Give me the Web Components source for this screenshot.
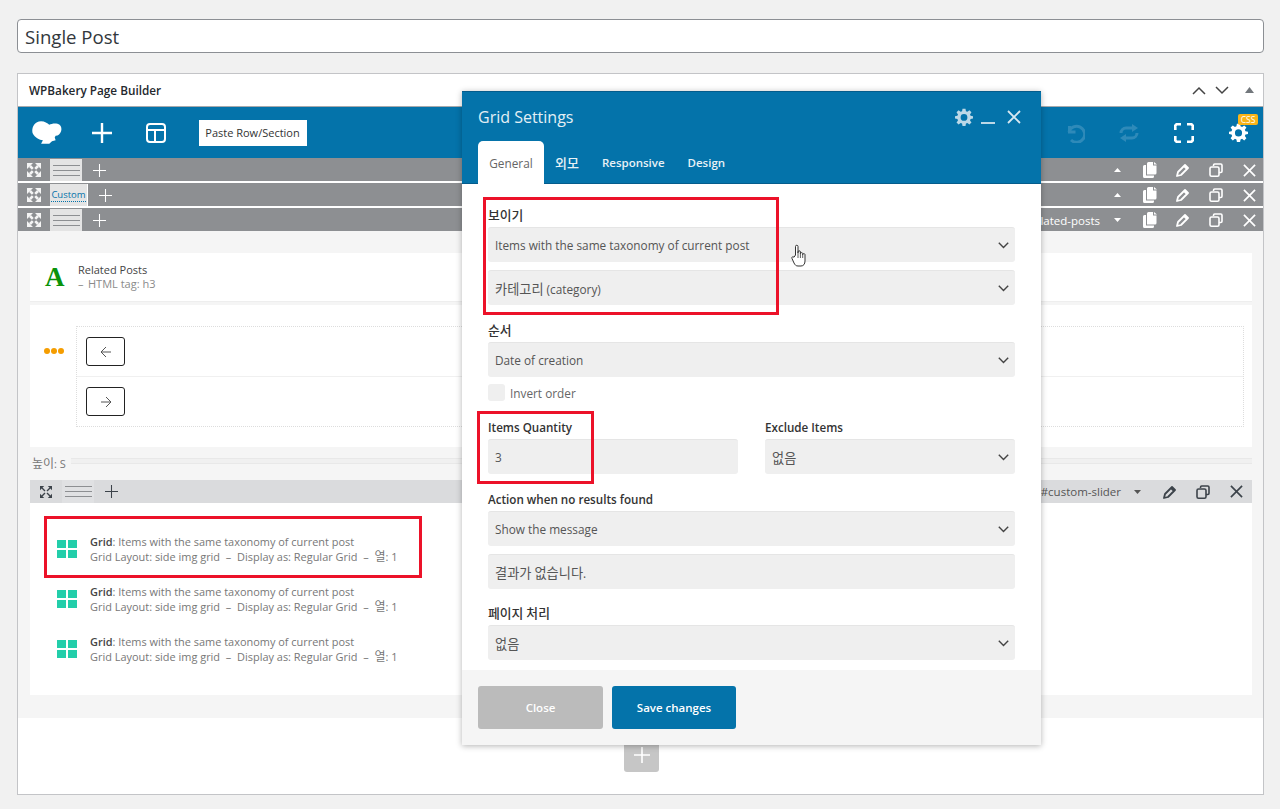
<!doctype html>
<html lang="ko">
<head>
<meta charset="utf-8">
<title>Single Post</title>
<style>
  html, body { margin: 0; background: #f1f1f1; }
  body {
    position: relative;
    height: 809px;
    overflow: hidden;
    box-sizing: border-box;
    padding: 19px 16px 0 17px;
    font-family: "Open Sans", "Noto Sans CJK KR", sans-serif;
    font-size: 12px;
    color: #444;
  }
</style>
</head>
<body>
  <title-box>Single Post</title-box>
  <builder-box>
    <row-bar tab="lines"></row-bar>
    <row-bar tab="custom" gap></row-bar>
    <row-bar tab="lines" gap label="related-posts" down></row-bar>
    <content-area>
      <heading-card></heading-card>
      <slider-card></slider-card>
      <height-sep></height-sep>
      <row-bar light tab="lines" label="#custom-slider" down></row-bar>
      <grid-list>
        <grid-item></grid-item>
        <grid-item></grid-item>
        <grid-item></grid-item>
      </grid-list>
    </content-area>
    <add-foot></add-foot>
  </builder-box>

  <settings-modal>
    <set-field label="보이기" value="Items with the same taxonomy of current post" select style="margin-top:23px"></set-field>
    <set-field value="카테고리 (category)" select style="margin-top:8px"></set-field>
    <set-field label="순서" value="Date of creation" select style="margin-top:17px"></set-field>
    <invert-check>Invert order</invert-check>
    <field-pair>
      <set-field label="Items Quantity" value="3"></set-field>
      <set-field label="Exclude Items" value="없음" select></set-field>
    </field-pair>
    <set-field label="Action when no results found" value="Show the message" select style="margin-top:17px"></set-field>
    <set-field value="결과가 없습니다." style="margin-top:8px"></set-field>
    <set-field label="페이지 처리" value="없음" select style="margin-top:16px"></set-field>
  </settings-modal>

  <mark-box style="left:483px;top:197px;width:296px;height:118px"></mark-box>
  <mark-box style="left:477px;top:411px;width:117px;height:73px"></mark-box>
  <mark-box style="left:44px;top:516px;width:378px;height:62px"></mark-box>
  <hand-cursor></hand-cursor>

<script>
const hangul = text => text.replace(/[가-힣]+/g, m => `<span class="k">${m}</span>`)

const gear = (size, fill) => `<svg width="${size}" height="${size}" viewBox="0 0 24 24"><path fill="${fill}" fill-rule="evenodd" d="M10 1h4l.6 3.2 1.900.8L19.200 3 22 5.800 20 8.500l.8 1.900L24 11v3l-3.200.6-.8 1.900 2 2.700-2.800 2.800-2.700-2-1.900.8L14 24h-4l-.6-3.200-1.900-.8-2.700 2L2 19.200l2-2.700-.8-1.900L0 14v-3l3.200-.6.8-1.900-2-2.700L4.800 3l2.700 2 1.900-.8zM12 8a4.500 4.500 0 1 0 0 9 4.500 4.500 0 0 0 0-9z"/></svg>`

const cross = (size, color, w = 2) => `<svg width="${size}" height="${size}" viewBox="0 0 14 14"><path d="M1 1l12 12M13 1L1 13" stroke="${color}" stroke-width="${w}" fill="none"/></svg>`

const plus = (size, color, w = 2) => `<svg width="${size}" height="${size}" viewBox="0 0 20 20"><path d="M10 0v20M0 10h20" stroke="${color}" stroke-width="${w}" fill="none"/></svg>`

const chevron = (dir, color) => `<svg width="14" height="9" viewBox="0 0 14 9"><path d="${dir === 'up' ? 'M1 8l6-6 6 6' : 'M1 1l6 6 6-6'}" stroke="${color}" stroke-width="1.500" fill="none"/></svg>`

const caret = (dir, color, w = 7, h = 4) => `<svg width="${w}" height="${h}" viewBox="0 0 8 5" preserveAspectRatio="none"><path d="${dir === 'up' ? 'M4 0l4 5H0z' : 'M0 0h8L4 5z'}" fill="${color}"/></svg>`

const moveSolid = color => `<svg width="14" height="14" viewBox="0 0 14 14">
  <path fill="${color}" d="M0 0h6L0 6zM14 0v6L8 0zM0 14V8l6 6zM14 14H8l6-6z"/>
  <path stroke="${color}" stroke-width="2.600" d="M3 3l2.800 2.800M11 3L8.200 5.800M3 11l2.800-2.800M11 11L8.200 8.200"/>
</svg>`

const moveLine = color => `<svg width="14" height="14" viewBox="0 0 14 14">
  <path fill="${color}" d="M1 1h4.200L1 5.200zM13 1v4.200L8.800 1zM1 13V8.800L5.200 13zM13 13H8.800L13 8.800z"/>
  <path stroke="${color}" stroke-width="1.400" d="M3 3l3 3M11 3L8 6M3 11l3-3M11 11L8 8"/>
</svg>`

const linesIcon = color => `<svg width="27" height="13" viewBox="0 0 27 13"><path d="M0 1.500h27M0 6.500h27M0 11.500h27" stroke="${color}" stroke-width="1.200"/></svg>`

const pasteIcon = color => `<svg width="14" height="16" viewBox="0 0 14 16"><path fill="${color}" d="M4 1.500A1.500 1.500 0 0 1 5.500 0H10v3.500h3.500V11a1.500 1.500 0 0 1-1.500 1.500H4zM11 0l3 2.500h-3zM0 4.500A1.500 1.500 0 0 1 1.500 3H3v10.500h8V14.500A1.500 1.500 0 0 1 9.500 16h-8A1.500 1.500 0 0 1 0 14.500z"/></svg>`

const pencilIcon = color => `<svg width="14" height="14" viewBox="0 0 14 14"><path fill="none" stroke="${color}" stroke-width="1.800" stroke-linejoin="round" d="M1 13l1-4 7-7 3 3-7 7zM8 3l3 3"/></svg>`

const copyIcon = color => `<svg width="14" height="14" viewBox="0 0 14 14"><path fill="none" stroke="${color}" stroke-width="1.600" d="M4.500 3V2.200A1.200 1.200 0 0 1 5.700 1h6.100A1.200 1.200 0 0 1 13 2.200v6.100a1.200 1.200 0 0 1-1.200 1.200H10"/><rect x="1" y="4" width="9" height="9.200" rx="1.500" fill="none" stroke="${color}" stroke-width="1.600"/></svg>`

class BaseElement extends HTMLElement {
  constructor () {
    super()
    this.attachShadow({ mode: 'open' })
  }

  connectedCallback () {
    this.shadowRoot.innerHTML = `<style>${this.css}</style>${this.html}`
  }
}

class TitleBox extends BaseElement {
  get css () {
    return `:host {
      display: flex; align-items: center; box-sizing: border-box;
      height: 34px; width: 1247px; padding: 0 7px;
      background: #fff; border: 1px solid #8c8f94; border-radius: 4px;
      font-size: 18.600px; color: #32373c;
    }`
  }
  get html () { return `<slot></slot>` }
}

class BuilderBox extends BaseElement {
  get css () {
    return `
      :host {
        display: block; box-sizing: border-box; margin-top: 20px;
        width: 1247px; height: 722px;
        background: #fff; border: 1px solid #c3c4c7;
      }
      .head {
        display: flex; align-items: center; height: 32px; padding: 0 8px 0 11px;
        font-size: 11.750px; font-weight: 600; color: #23282d;
        border-bottom: 1px solid #a7a9ac;
      }
      .name { flex: 1; }
      .head svg { display: block; }
      .head .c { margin-left: 9px; }
      .head .t { margin-left: 16px; margin-right: 1px; }
      .bar {
        display: flex; align-items: center; height: 51px; padding: 0 10px 0 14px;
        background: #0473aa; gap: 24.500px;
      }
      .ic { width: 30px; display: flex; justify-content: center; }
      .paste {
        display: flex; align-items: center; justify-content: center;
        width: 108px; height: 26px; margin-left: 3px;
        background: #fff; color: #333; font-size: 11px;
      }
      .fill { flex: 1; }
      .gearbox { position: relative; }
      .badge {
        position: absolute; left: 15px; top: -9px; width: 20px; height: 11px;
        background: #f9b418; border-radius: 2px; color: #fff;
        font-size: 8.500px; line-height: 11px; text-align: center;
      }
    `
  }
  get html () {
    return `
      <div class="head">
        <span class="name">WPBakery Page Builder</span>
        <span class="c">${chevron('up', '#444')}</span>
        <span class="c">${chevron('down', '#444')}</span>
        <span class="t">${caret('up', '#72777c', 9, 6)}</span>
      </div>
      <div class="bar">
        <span class="ic"><svg width="33" height="25" viewBox="0 0 33 25"><path fill="#fff" d="M10 0c4 0 7 2 9 4 2-1 6-2 9-1 4 1 5 5 4 8-1 3-3 5-6 5l-1 2 1 3-4 1-3 3H10l2-4c-4 0-9-3-11-7C-1 10 1 0 10 0z"/></svg></span>
        <span class="ic">${plus(20, '#fff', 2.400)}</span>
        <span class="ic"><svg width="20" height="20" viewBox="0 0 20 20"><rect x="1" y="1" width="18" height="18" rx="3" fill="none" stroke="#fff" stroke-width="2"/><path d="M1 7h18M9 7v12" stroke="#fff" stroke-width="2"/></svg></span>
        <span class="paste">Paste Row/Section</span>
        <span class="fill"></span>
        <span class="ic"><svg width="20" height="20" viewBox="0 0 20 20"><path fill="none" stroke="#2e8ab9" stroke-width="3" d="M4.500 3v6h6M4 9a8 8 0 1 1 2 8"/></svg></span>
        <span class="ic"><svg width="20" height="18" viewBox="0 0 20 18"><path fill="none" stroke="#2e8ab9" stroke-width="3" d="M2 9a5 5 0 0 1 5-5h8M18 9a5 5 0 0 1-5 5H5"/><path fill="#2e8ab9" d="M13 0l6 4-6 4zM7 10l-6 4 6 4z"/></svg></span>
        <span class="ic"><svg width="20" height="20" viewBox="0 0 20 20"><path fill="none" stroke="#fff" stroke-width="2.600" d="M1.300 7V2.500l1.200-1.200H7M13 1.300h4.500l1.200 1.200V7M18.700 13v4.500l-1.200 1.200H13M7 18.700H2.500l-1.200-1.200V13"/></svg></span>
        <span class="ic gearbox">${gear(19, '#fff')}<span class="badge">CSS</span></span>
      </div>
      <slot></slot>
    `
  }
}

class RowBar extends BaseElement {
  get css () {
    const light = this.hasAttribute('light')
    return `
      :host {
        display: flex; align-items: center; height: 23px;
        margin-top: ${this.hasAttribute('gap') ? '2px' : '0'};
        background: ${light ? '#dadbdd' : '#8d8f92'};
        border-top: ${light ? '0' : '1px solid #8d8f92'};
        box-sizing: ${light ? 'border-box' : 'content-box'};
        padding-right: ${light ? 8 : 6}px;
        font-size: 11.500px; color: ${light ? '#555' : '#fff'};
        ${light ? '' : 'height: 22px;'}
      }
      svg { display: block; }
      .mv { width: 32px; display: flex; justify-content: center; }
      .tab {
        display: flex; align-items: center; justify-content: center;
        align-self: stretch; width: 32px;
        background: ${light ? '#e0e1e3' : '#e4e4e4'};
      }
      .tab.cust { width: 38px; border-right: 1px solid #fff; box-sizing: border-box; }
      .cust span {
        font-size: 9.500px; line-height: 13px; color: #0473aa;
        border-bottom: 1px dotted #0473aa;
      }
      .pl { margin-left: 11px; }
      .fill { flex: 1; }
      .label { margin-right: ${light ? 8 : 9}px; }
      .i { width: 16px; display: flex; justify-content: center; margin-left: 17px; }
      .i.first { margin-left: 0; }
    `
  }
  get html () {
    const light = this.hasAttribute('light')
    const fg = light ? '#3c434a' : '#fff'
    const label = this.getAttribute('label')
    const custom = this.getAttribute('tab') === 'custom'
    return `
      <span class="mv">${light ? moveLine('#3c434a') : moveSolid('#f4f4f4')}</span>
      <span class="tab ${custom ? 'cust' : ''}">${custom ? '<span>Custom</span>' : linesIcon('#8d8f92')}</span>
      <span class="pl">${plus(13, fg, 1.600)}</span>
      <span class="fill"></span>
      ${label ? `<span class="label">${label}</span>` : ''}
      <span class="i first">${caret(this.hasAttribute('down') ? 'down' : 'up', light ? '#555' : fg)}</span>
      ${light ? '' : `<span class="i">${pasteIcon(fg)}</span>`}
      <span class="i">${pencilIcon(fg)}</span>
      <span class="i">${copyIcon(fg)}</span>
      <span class="i">${cross(13, fg, 1.800)}</span>
    `
  }
}

class ContentArea extends BaseElement {
  get css () {
    return `:host {
      display: block; box-sizing: border-box; height: 487px;
      padding: 22px 11px 0 12px; background: #f5f5f5;
    }`
  }
  get html () { return `<slot></slot>` }
}

class HeadingCard extends BaseElement {
  get css () {
    return `
      :host {
        display: flex; align-items: center; box-sizing: border-box;
        height: 49px; padding-left: 15px;
        background: #fff; border-bottom: 1px solid #eee;
      }
      .a {
        width: 33px; font: bold 27px/1 "Liberation Serif", serif; color: #0a930a;
      }
      .t { font-size: 11px; line-height: 14px; color: #444; }
      .s { color: #8a8a8a; }
      .d { display: inline-block; width: 10px; }
    `
  }
  get html () {
    return `<span class="a">A</span><div class="t">Related Posts<div class="s"><span class="d">–</span>HTML tag: h3</div></div>`
  }
}

class SliderCard extends BaseElement {
  get css () {
    return `
      :host {
        display: flex; align-items: flex-start; box-sizing: border-box;
        height: 142px; margin-top: 3px; padding: 21px 8px 0 14px; background: #fff;
      }
      .dots { display: flex; gap: 1px; width: 32px; margin-top: 22px; }
      .dots i { width: 6px; height: 6px; border-radius: 50%; background: #f59d00; }
      .box { flex: 1; border: 1px dotted #ddd; }
      .cell { height: 49px; box-sizing: border-box; padding: 10px 0 0 9px; }
      .cell + .cell { height: 50px; padding-top: 10px; border-top: 1px solid #f0f0f0; }
      .btn {
        display: flex; align-items: center; justify-content: center;
        width: 39px; height: 29px; box-sizing: border-box;
        border: 1px solid #222; border-radius: 3px; background: #fff;
      }
    `
  }
  get html () {
    const arrow = d => `<svg width="12" height="12" viewBox="0 0 12 12"><path d="${d}" fill="none" stroke="#555" stroke-width="1"/></svg>`
    return `
      <div class="dots"><i></i><i></i><i></i></div>
      <div class="box">
        <div class="cell"><span class="btn">${arrow('M11 6H1M6 1L1 6l5 5')}</span></div>
        <div class="cell"><span class="btn">${arrow('M1 6h10M6 1l5 5-5 5')}</span></div>
      </div>
    `
  }
}

class HeightSep extends BaseElement {
  get css () {
    return `
      :host {
        display: flex; align-items: center; box-sizing: border-box;
        height: 33px; padding: 0 0 2px 2px; font-size: 11px; color: #777;
      }
      .k { font-size: 12px; }
      .l { flex: 1; height: 4px; margin-left: 5px; margin-top: -4px; background: #f0f0f0; border: solid #e8e8e8; border-width: 1px 0; }
    `
  }
  get html () { return `<span>${hangul('높이: S')}</span><span class="l"></span>` }
}

class GridList extends BaseElement {
  get css () {
    return `:host { display: block; box-sizing: border-box; height: 192px; padding-top: 21px; background: #fff; }`
  }
  get html () { return `<slot></slot>` }
}

class GridItem extends BaseElement {
  get css () {
    return `
      :host {
        display: flex; align-items: center; height: 50px; padding-left: 27px;
        font-size: 10.950px; line-height: 15px; color: #777;
      }
      .ic { display: grid; grid-template-columns: 9px 9px; grid-template-rows: 8px 8px; gap: 2px; margin-right: 13px; }
      .ic i { background: #22ceaa; }
      b { font-weight: 600; color: #444; }
      .d { display: inline-block; width: 12px; margin: 0 2.500px; text-align: center; }
      .k { font-size: 12px; line-height: 1; }
    `
  }
  get html () {
    return `
      <span class="ic"><i></i><i></i><i></i><i></i></span>
      <div><b>Grid</b>: Items with the same taxonomy of current post<br>Grid Layout: side img grid<span class="d">–</span>Display as: Regular Grid<span class="d">–</span>${hangul('열')}: 1</div>
    `
  }
}

class AddFoot extends BaseElement {
  get css () {
    return `
      :host { display: flex; justify-content: center; padding: 20px 0 0 2px; }
      .b {
        display: flex; align-items: center; justify-content: center;
        width: 35px; height: 34px; background: #c6c6c6; border-radius: 3px;
      }
    `
  }
  get html () { return `<span class="b">${plus(16, '#fff', 2)}</span>` }
}

class SettingsModal extends BaseElement {
  get css () {
    return `
      :host {
        position: absolute; left: 462px; top: 91px; width: 579px; height: 654px;
        display: flex; flex-direction: column;
        background: #fff; box-shadow: 0 1px 6px rgba(0,0,0,.3);
      }
      .top {
        height: 93px; box-sizing: border-box; background: #0473aa;
        border-top: 1px solid #045c8c; border-bottom: 1px solid #045c8c;
        padding: 0 20px 0 16px; display: flex; flex-direction: column;
      }
      .line { display: flex; align-items: center; height: 49px; }
      .title { flex: 1; font-size: 16px; color: #e3eff5; }
      .tools { display: flex; align-items: center; }
      .tools svg { display: block; }
      .min { width: 14px; height: 2px; background: #bcd8e7; margin: 12px 12px 0 8px; }
      .tabs { display: flex; flex: 1; align-items: stretch; font-size: 11.500px; font-weight: 600; color: #e8f1f6; }
      .tabs span { display: flex; align-items: center; margin-left: 23px; padding-top: 1px; }
      .tabs .on {
        width: 66px; justify-content: center; margin: 0 11px -1px 0; padding: 0;
        background: #fff; color: #666; font-weight: 400; font-size: 11.800px; border-radius: 5px 5px 0 0;
      }
      .tabs .on + span { margin-left: 0; font-size: 13px; font-weight: 500; }
      .body { flex: 1; padding: 0 26px; min-height: 0; }
      .foot {
        display: flex; gap: 9px; height: 75px; box-sizing: border-box;
        padding: 16px; background: #f5f5f5;
      }
      .foot span {
        display: flex; align-items: center; justify-content: center;
        width: 125px; height: 43px; border-radius: 3px;
        font-size: 11.500px; font-weight: 600; color: #fff;
      }
      .close { background: #bbb; }
      .foot .save { background: #0473aa; width: 124px; }
    `
  }
  get html () {
    return `
      <div class="top">
        <div class="line">
          <span class="title">Grid Settings</span>
          <span class="tools">${gear(18, '#bcd8e7')}<i class="min"></i>${cross(14, '#d8e8f1', 1.800)}</span>
        </div>
        <div class="tabs"><span class="on">General</span><span>외모</span><span>Responsive</span><span>Design</span></div>
      </div>
      <div class="body"><slot></slot></div>
      <div class="foot"><span class="close">Close</span><span class="save">Save changes</span></div>
    `
  }
}

class SetField extends BaseElement {
  get css () {
    return `
      :host { display: block; font-size: 11.800px; }
      label { display: block; margin-bottom: 3px; line-height: 17px; font-weight: 600; font-size: 11.650px; color: #333; }
      label .k { font-size: 12.800px; font-weight: 500; }
      .f {
        display: flex; align-items: center; box-sizing: border-box;
        height: 35px; padding: 0 6px 0 7px;
        background: #efefef; border-top: 1px solid #e5e5e5; border-radius: 3px;
        color: #555;
      }
      .v { flex: 1; }
      .k { font-size: 13.200px; }
      svg { display: block; }
    `
  }
  get html () {
    const label = this.getAttribute('label')
    return `
      ${label ? `<label>${hangul(label)}</label>` : ''}
      <div class="f"><span class="v">${hangul(this.getAttribute('value'))}</span>${this.hasAttribute('select') ? `<svg width="11" height="7" viewBox="0 0 11 7"><path d="M.8.8l4.700 4.700L10.200.8" fill="none" stroke="#444" stroke-width="1.400"/></svg>` : ''}</div>
    `
  }
}

class InvertCheck extends BaseElement {
  get css () {
    return `
      :host { display: flex; align-items: center; gap: 5px; margin-top: 7px; color: #666; font-size: 11.800px; }
      i { width: 17px; height: 17px; background: #efefef; border-radius: 3px; }
    `
  }
  get html () { return `<i></i><slot></slot>` }
}

class FieldPair extends BaseElement {
  get css () {
    return `:host { display: grid; grid-template-columns: 250px 250px; gap: 27px; margin-top: 18px; }`
  }
  get html () { return `<slot></slot>` }
}

class MarkBox extends BaseElement {
  get css () {
    return `:host { position: absolute; box-sizing: border-box; border: 3px solid #ec1229; }`
  }
  get html () { return `` }
}

class HandCursor extends BaseElement {
  get css () {
    return `:host { position: absolute; left: 791px; top: 244px; width: 16px; height: 23px; } svg { display: block; }`
  }
  get html () {
    return `<svg width="16" height="23" viewBox="0 0 16 23"><path fill="#fff" stroke="#333" stroke-width="1" stroke-linejoin="round" d="M4.500 11V2.500a1.200 1.200 0 0 1 2.500 0V9V8a1.200 1.200 0 0 1 2.400 0v1.500a1.200 1.200 0 0 1 2.300 0v1a1.200 1.200 0 0 1 2.300 0V17c0 3-1.500 5-4 5H7c-2 0-3-1-4-3L1 14.500c-.6-1.500 1-2.500 2-1.200z"/><path stroke="#333" stroke-width=".8" d="M7 9v5M9.400 9v5M11.700 10v4"/></svg>`
  }
}

const elements = {
  'title-box': TitleBox,
  'builder-box': BuilderBox,
  'row-bar': RowBar,
  'content-area': ContentArea,
  'heading-card': HeadingCard,
  'slider-card': SliderCard,
  'height-sep': HeightSep,
  'grid-list': GridList,
  'grid-item': GridItem,
  'add-foot': AddFoot,
  'settings-modal': SettingsModal,
  'set-field': SetField,
  'invert-check': InvertCheck,
  'field-pair': FieldPair,
  'mark-box': MarkBox,
  'hand-cursor': HandCursor
}
for (const name of Object.keys(elements)) customElements.define(name, elements[name])
</script>
</body>
</html>
